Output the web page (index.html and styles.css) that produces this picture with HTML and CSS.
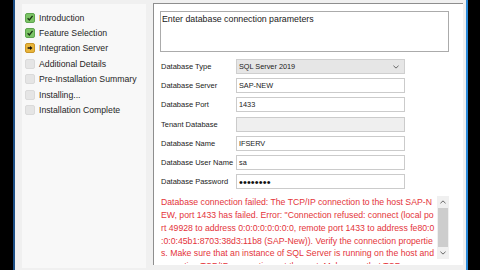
FILE: index.html
```html
<!DOCTYPE html>
<html>
<head>
<meta charset="utf-8">
<link rel="stylesheet" href="styles.css">
</head>
<body>
<div class="edge-left"></div>
<div class="window">
  <div class="steps">
    <div class="step"><span class="ico done"><svg viewBox="0 0 10 10"><polyline points="2,5.2 4.2,7.5 8.2,2.4" /></svg></span>Introduction</div>
    <div class="step"><span class="ico done"><svg viewBox="0 0 10 10"><polyline points="2,5.2 4.2,7.5 8.2,2.4" /></svg></span>Feature Selection</div>
    <div class="step"><span class="ico current"><svg viewBox="0 0 10 10"><path d="M2 4.2h3V2.4L8.2 5 5 7.6V5.8H2z" /></svg></span>Integration Server</div>
    <div class="step"><span class="ico todo"></span>Additional Details</div>
    <div class="step"><span class="ico todo"></span>Pre-Installation Summary</div>
    <div class="step"><span class="ico todo"></span>Installing...</div>
    <div class="step"><span class="ico todo"></span>Installation Complete</div>
  </div>
  <div class="panel">
    <div class="intro">Enter database connection parameters</div>
    <div class="form">
      <div class="lbl">Database Type</div>
      <div class="field select"><span>SQL Server 2019</span><svg class="chev" viewBox="0 0 7 4"><polyline points="0.5,0.5 3.5,3.3 6.5,0.5" /></svg></div>
      <div class="lbl">Database Server</div>
      <div class="field">SAP-NEW</div>
      <div class="lbl">Database Port</div>
      <div class="field">1433</div>
      <div class="lbl">Tenant Database</div>
      <div class="field disabled"></div>
      <div class="lbl">Database Name</div>
      <div class="field">IFSERV</div>
      <div class="lbl">Database User Name</div>
      <div class="field">sa</div>
      <div class="lbl">Database Password</div>
      <div class="field pwd">••••••••</div>
    </div>
    <div class="error">
      <div class="msg">
        <div>Database connection failed: The TCP/IP connection to the host SAP-N</div>
        <div>EW, port 1433 has failed. Error: "Connection refused: connect (local po</div>
        <div>rt 49928 to address 0:0:0:0:0:0:0:0, remote port 1433 to address fe80:0</div>
        <div>:0:0:45b1:8703:38d3:11b8 (SAP-New)). Verify the connection propertie</div>
        <div>s. Make sure that an instance of SQL Server is running on the host and</div>
        <div>accepting TCP/IP connections at the port. Make sure that TCP connec</div>
      </div>
      <div class="scroll">
        <div class="sbtn"><svg viewBox="0 0 7 4"><polyline points="0.5,3.5 3.5,0.7 6.5,3.5" /></svg></div>
        <div class="thumb"></div>
        <div class="sbtn"><svg viewBox="0 0 7 4"><polyline points="0.5,0.5 3.5,3.3 6.5,0.5" /></svg></div>
      </div>
    </div>
  </div>
</div>
<div class="edge-right"></div>
</body>
</html>
```
FILE: styles.css
```css
html, body {
  margin: 0;
  padding: 0;
}
body {
  width: 480px;
  height: 270px;
  overflow: hidden;
  background: #000;
  display: flex;
  font-family: "Liberation Sans", Arial, sans-serif;
  color: #222;
}
.edge-left {
  width: 13px;
  flex: none;
  border-right: 2px solid #1d4f86;
}
.edge-right {
  width: 12px;
  flex: none;
  border-left: 2px solid #2b8ad9;
}
.window {
  width: 451px;
  flex: none;
  background: #f0f0f0;
  display: flex;
  align-items: flex-start;
  padding-left: 7px;
  box-sizing: border-box;
  gap: 7px;
}
.steps {
  width: 124px;
  height: 264px;
  margin-top: 4px;
  background: #f8f8f8;
  box-sizing: border-box;
  padding: 6px 0 0 3px;
}
.step {
  height: 15.4px;
  display: flex;
  align-items: center;
  gap: 4px;
  font-size: 8.7px;
  color: #262626;
  white-space: nowrap;
}
.ico {
  width: 10px;
  height: 10px;
  box-sizing: border-box;
  border-radius: 2px;
  flex: none;
  display: block;
}
.ico svg {
  display: block;
  width: 100%;
  height: 100%;
}
.done {
  background: #7cc466;
  border: 1px solid #5fa650;
}
.done polyline {
  fill: none;
  stroke: #1c3515;
  stroke-width: 1.7;
}
.current {
  background: #e9b53a;
  border: 1px solid #c99528;
}
.current path {
  fill: #111;
}
.todo {
  background: #e5e5e5;
  border: 1px solid #dadada;
}
.panel {
  width: 310px;
  height: 262px;
  margin-top: 3px;
  background: #fff;
  border-top: 1px solid #8e8e8e;
  border-left: 1px solid #8e8e8e;
  box-sizing: border-box;
  padding: 7px 0 0 6px;
  overflow: hidden;
}
.intro {
  width: 289px;
  height: 41px;
  box-sizing: border-box;
  border: 1px solid #ababab;
  font-size: 8.8px;
  padding: 2px 0 0 1px;
  color: #1a1a1a;
}
.form {
  margin-top: 7px;
  display: grid;
  grid-template-columns: 76px 169px;
  grid-auto-rows: 15px;
  row-gap: 4.2px;
}
.lbl {
  font-size: 7.5px;
  padding-left: 1px;
  display: flex;
  align-items: center;
  color: #222;
  white-space: nowrap;
}
.field {
  border: 1px solid #cbcbcb;
  box-sizing: border-box;
  font-size: 7.3px;
  padding-left: 2px;
  display: flex;
  align-items: center;
  background: #fff;
  color: #1a1a1a;
}
.select {
  background: #e6e6e6;
  border-color: #cfcfcf;
  justify-content: space-between;
  padding-right: 5px;
}
.chev {
  width: 6px;
  height: 4px;
}
.chev polyline, .sbtn polyline {
  fill: none;
  stroke: #606060;
  stroke-width: 1.1;
}
.disabled {
  background: #efefef;
}
.pwd {
  font-size: 11px;
  letter-spacing: 0.1px;
  padding-left: 2px;
  color: #111;
}
.error {
  margin-top: 7px;
  width: 289px;
  height: 68px;
  display: flex;
}
.msg {
  flex: 1;
  color: #e4343a;
  font-size: 8.7px;
  line-height: 12.8px;
  padding-left: 1px;
  white-space: nowrap;
  overflow: hidden;
}
.scroll {
  width: 12px;
  flex: none;
  background: #f0f0f0;
  display: flex;
  flex-direction: column;
  height: 63px;
  margin-top: 0;
}
.sbtn {
  height: 12px;
  display: flex;
  align-items: center;
  justify-content: center;
}
.sbtn svg {
  width: 6px;
  height: 4px;
}
.thumb {
  flex: 1;
  background: #cdcdcd;
  margin: 0 1px;
}
```
